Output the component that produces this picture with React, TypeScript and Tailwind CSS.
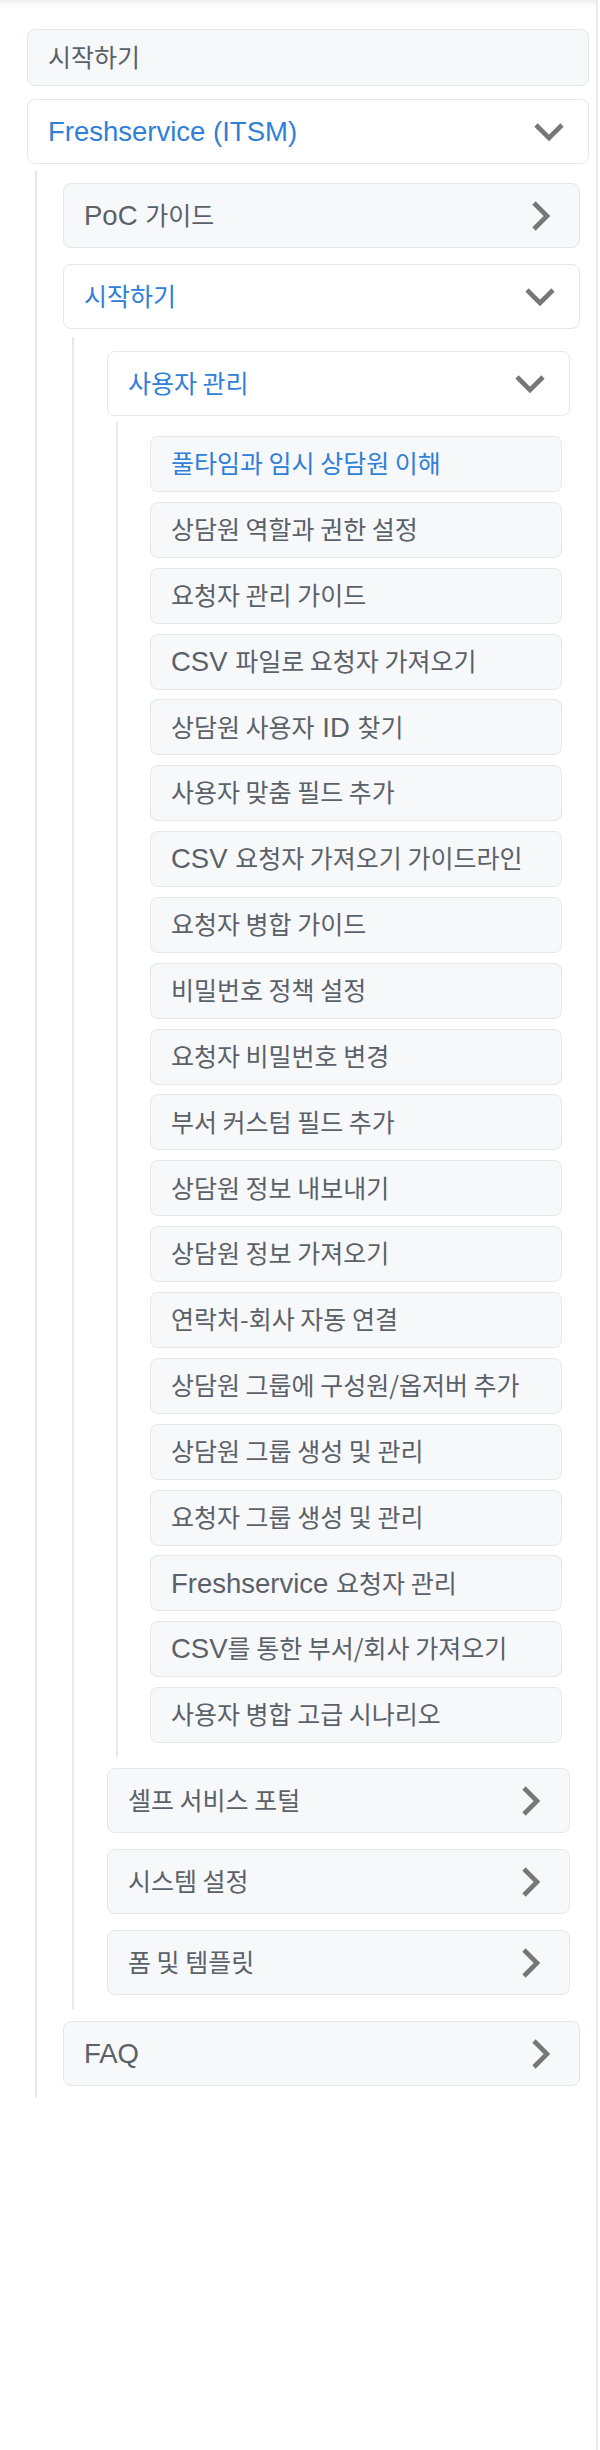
import React from "react";

type Item = {
  label: string;
  open?: boolean;
  arrow?: boolean;
  active?: boolean;
  children?: Item[];
};

const leaves: Item[] = [
  { label: "풀타임과 임시 상담원 이해", active: true },
  { label: "상담원 역할과 권한 설정" },
  { label: "요청자 관리 가이드" },
  { label: "CSV 파일로 요청자 가져오기" },
  { label: "상담원 사용자 ID 찾기" },
  { label: "사용자 맞춤 필드 추가" },
  { label: "CSV 요청자 가져오기 가이드라인" },
  { label: "요청자 병합 가이드" },
  { label: "비밀번호 정책 설정" },
  { label: "요청자 비밀번호 변경" },
  { label: "부서 커스텀 필드 추가" },
  { label: "상담원 정보 내보내기" },
  { label: "상담원 정보 가져오기" },
  { label: "연락처-회사 자동 연결" },
  { label: "상담원 그룹에 구성원/옵저버 추가" },
  { label: "상담원 그룹 생성 및 관리" },
  { label: "요청자 그룹 생성 및 관리" },
  { label: "Freshservice 요청자 관리" },
  { label: "CSV를 통한 부서/회사 가져오기" },
  { label: "사용자 병합 고급 시나리오" },
];

const tree: Item[] = [
  { label: "시작하기" },
  {
    label: "Freshservice (ITSM)",
    open: true,
    children: [
      { label: "PoC 가이드", arrow: true },
      {
        label: "시작하기",
        open: true,
        children: [
          { label: "사용자 관리", open: true, children: leaves },
          { label: "셀프 서비스 포털", arrow: true },
          { label: "시스템 설정", arrow: true },
          { label: "폼 및 템플릿", arrow: true },
        ],
      },
      { label: "FAQ", arrow: true },
    ],
  },
];

// spacing per depth (measured from the screenshot)
const listGap = ["gap-[13px]", "gap-[16px]", "gap-[16px]", "gap-[9.85px]"];
const kidsBox = [
  "mt-[7px] ml-[8px] mr-[9px] pl-[26px] pt-[12px] pb-[12px]",
  "mt-[8px] -mb-[4px] ml-[9px] mr-[10px] pl-[33px] pt-[14px] pb-[14px]",
  "mt-[6px] -mb-[5px] ml-[9px] mr-[8px] pl-[32px] pt-[14px] pb-[14px]",
];

// hangul runs are set in Noto CJK, latin in Liberation Sans
function Label({ text }: { text: string }) {
  const parts = text.split(/([\uAC00-\uD7A3]+(?:[ /-][\uAC00-\uD7A3]+)*)/);
  return (
    <span className="leading-none whitespace-nowrap">
      {parts.map((p, i) =>
        /[\uAC00-\uD7A3]/.test(p) ? (
          <span key={i} className="font-['Noto_Sans_CJK_KR',sans-serif] text-[25px] leading-none">
            {p}
          </span>
        ) : (
          <span key={i}>{p}</span>
        )
      )}
    </span>
  );
}

function Chevron({ down }: { down?: boolean }) {
  return (
    <svg width="32" height="32" viewBox="0 0 32 32" className="shrink-0">
      <polyline
        points={down ? "3,9 16,22 29,9" : "10,3 23,16 10,29"}
        fill="none"
        stroke="#777777"
        strokeWidth="4.6"
        strokeLinejoin="miter"
      />
    </svg>
  );
}

function Node({ item, depth }: { item: Item; depth: number }) {
  const hasIcon = item.open || item.arrow;
  const height = depth === 3 ? "h-[56px]" : hasIcon ? "h-[65px]" : "h-[57px]";
  const bg = item.open ? "bg-white" : "bg-[#f7f8fa]";
  const color = item.open || item.active ? "text-[#2f80d8]" : "text-[#5b6169]";

  return (
    <div>
      <div
        className={`flex items-center justify-between rounded-[8px] border border-[#e3e6ea] pl-[20px] pr-[23px] ${height} ${bg} ${color}`}
      >
        <Label text={item.label} />
        {hasIcon && <Chevron down={item.open} />}
      </div>
      {item.open && item.children && (
        <div className={`border-l-2 border-[#e6e8eb] ${kidsBox[depth]}`}>
          <div className={`flex flex-col ${listGap[depth + 1]}`}>
            {item.children.map((c, i) => (
              <Node key={i} item={c} depth={depth + 1} />
            ))}
          </div>
        </div>
      )}
    </div>
  );
}

export default function App() {
  return (
    <div className="w-[598px] min-h-[2450px] bg-white border-r-2 border-[#ececec] pt-[29px] pl-[27px] pr-[7px] font-['Liberation_Sans','Noto_Sans_CJK_KR',sans-serif] text-[27.5px] shadow-[inset_0_8px_8px_-8px_rgba(0,0,0,0.14)]">
      <div className={`flex flex-col ${listGap[0]}`}>
        {tree.map((item, i) => (
          <Node key={i} item={item} depth={0} />
        ))}
      </div>
    </div>
  );
}
